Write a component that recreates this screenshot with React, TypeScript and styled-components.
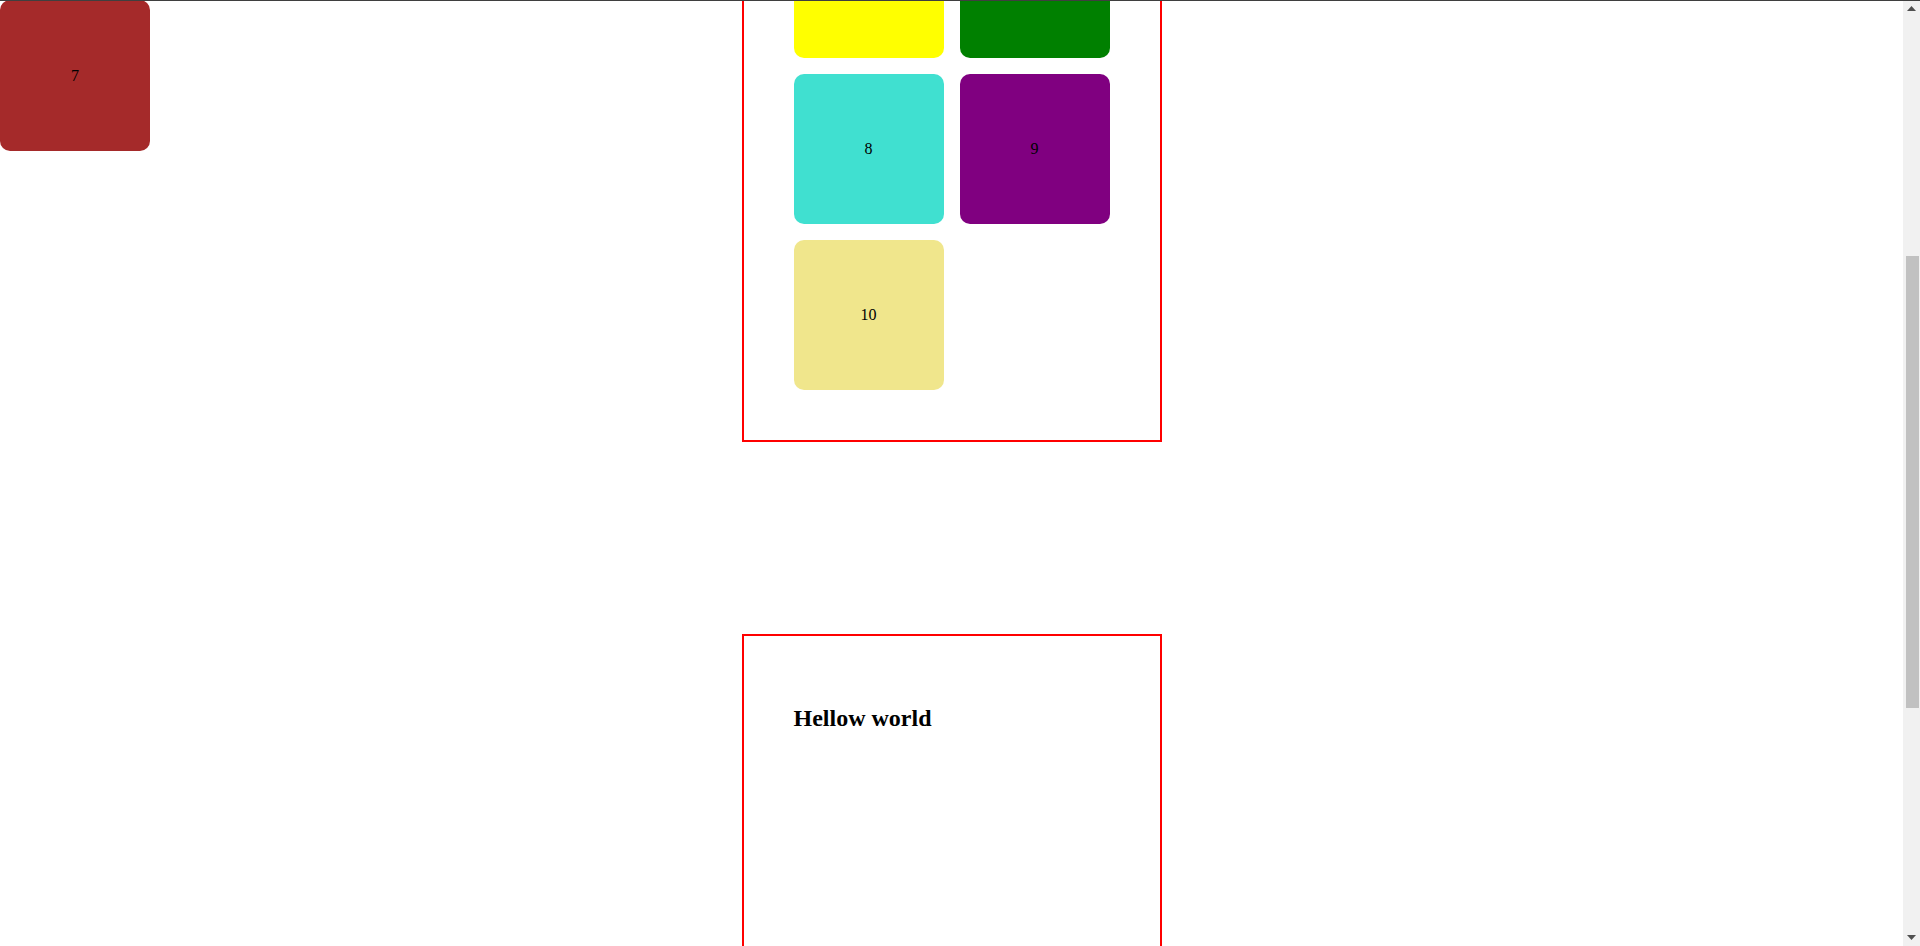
import React, { useLayoutEffect } from "react";
import styled, { createGlobalStyle } from "styled-components";

const GlobalStyle = createGlobalStyle`
  html, body {
    background: #ffffff;
  }
  html {
    padding-right: 17px;
  }
  body {
    margin: 8px;
    font-family: "Liberation Serif", "Times New Roman", serif;
    color: #000000;
  }
`;

const TopLine = styled.div`
  position: fixed;
  top: 0;
  left: 0;
  right: 0;
  height: 1px;
  background: #3f3f3f;
  z-index: 20;
`;

const ScrollTrack = styled.div`
  position: fixed;
  top: 0;
  right: 0;
  bottom: 0;
  width: 17px;
  background: #f1f1f1;
  display: flex;
  flex-direction: column;
  align-items: center;
  z-index: 10;
`;

const ScrollArrow = styled.div`
  height: 17px;
  width: 17px;
  display: flex;
  align-items: center;
  justify-content: center;
`;

const ScrollRail = styled.div`
  flex: 1;
  width: 100%;
  display: flex;
  flex-direction: column;
  align-items: center;
  padding-top: 239px;
`;

const ScrollThumb = styled.div`
  width: 13px;
  margin-left: 2px;
  height: 452px;
  background: #c1c1c1;
`;

const Card = styled.section<{ $tall?: boolean }>`
  width: 316px;
  margin: 0 auto;
  padding: 50px;
  border: 2px solid #ff0000;
  min-height: ${(p) => (p.$tall ? "600px" : "auto")};
`;

const Spacer = styled.div`
  height: 192px;
`;

const Grid = styled.div`
  display: grid;
  grid-template-columns: 150px 150px;
  grid-auto-rows: 150px;
  gap: 16px;
`;

const Tile = styled.div<{ $bg: string }>`
  display: flex;
  align-items: center;
  justify-content: center;
  background: ${(p) => p.$bg};
  border-radius: 10px;
  font-size: 16px;
`;

const FixedTile = styled(Tile)`
  position: fixed;
  top: 0;
  left: 0;
  width: 150px;
  height: 151px;
  z-index: 5;
`;

const Heading = styled.h2`
  font-size: 24px;
  font-weight: bold;
  margin: 19px 0 0;
`;

const tiles = [
  { n: 1, bg: "#ff0000" },
  { n: 2, bg: "#ffa500" },
  { n: 3, bg: "#0000ff" },
  { n: 4, bg: "#ffc0cb" },
  { n: 5, bg: "#ffff00" },
  { n: 6, bg: "#008000" },
  { n: 8, bg: "#40e0d0" },
  { n: 9, bg: "#800080" },
  { n: 10, bg: "#f0e68c" },
];

const Arrow = ({ up }: { up?: boolean }) => (
  <svg width="9" height="5" viewBox="0 0 9 5">
    <polygon
      points={up ? "4.5,0 9,5 0,5" : "0,0 9,0 4.5,5"}
      fill="#505050"
    />
  </svg>
);

export default function App() {
  useLayoutEffect(() => {
    window.scrollTo(0, 484);
    const t = setTimeout(() => window.scrollTo(0, 484), 0);
    return () => clearTimeout(t);
  }, []);

  return (
    <>
      <GlobalStyle />
      <TopLine />
      <ScrollTrack>
        <ScrollArrow>
          <Arrow up />
        </ScrollArrow>
        <ScrollRail>
          <ScrollThumb />
        </ScrollRail>
        <ScrollArrow>
          <Arrow />
        </ScrollArrow>
      </ScrollTrack>
      <Card>
        <Grid>
          {tiles.map((t) => (
            <Tile key={t.n} $bg={t.bg}>
              {t.n}
            </Tile>
          ))}
        </Grid>
      </Card>
      <FixedTile $bg="#a52a2a">7</FixedTile>
      <Spacer />
      <Card $tall>
        <Heading>Hellow world</Heading>
      </Card>
    </>
  );
}
